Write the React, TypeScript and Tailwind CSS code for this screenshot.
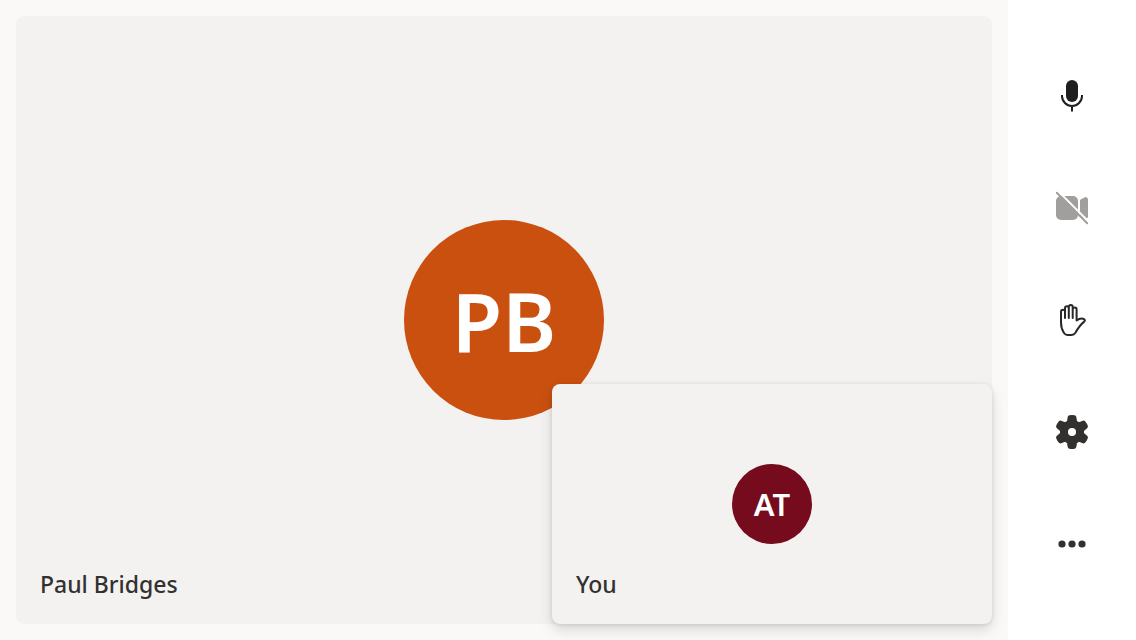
import type { ReactNode } from "react";

function ControlButton({ label, disabled, children }: { label: string; disabled?: boolean; children: ReactNode }) {
  return (
    <button
      type="button"
      aria-label={label}
      disabled={disabled}
      className="flex h-28 w-full items-center justify-center text-[#323130] disabled:text-[#a19f9d]"
    >
      <svg viewBox="0 0 40 40" className="size-10" fill="none" stroke="none" aria-hidden="true">
        {children}
      </svg>
    </button>
  );
}

const toothAngles = [0, 60, 120, 180, 240, 300];

export default function App() {
  return (
    <div className="flex min-h-screen bg-[#faf9f8] font-['Noto_Sans','Open_Sans',sans-serif] text-[#323130]">
      <main className="flex flex-1 p-4">
        <section
          aria-label="Paul Bridges"
          className="relative flex flex-1 items-center justify-center rounded-lg bg-[#f3f2f1]"
        >
          <div className="flex size-50 items-center justify-center rounded-full bg-[#ca5010] text-[82px] leading-none font-semibold text-white">
            PB
          </div>
          <p className="absolute bottom-6 left-6 text-[23px] leading-8 font-medium">Paul Bridges</p>

          <section
            aria-label="You"
            className="absolute right-0 bottom-0 flex h-60 w-110 items-center justify-center rounded-lg bg-[#f3f2f1] shadow-[0_6px_14px_rgba(0,0,0,0.13),0_1px_4px_rgba(0,0,0,0.11)]"
          >
            <div className="flex size-20 items-center justify-center rounded-full bg-[#750b1c] text-[31px] leading-none font-semibold text-white">
              AT
            </div>
            <p className="absolute bottom-6 left-6 text-[23px] leading-8 font-medium">You</p>
          </section>
        </section>
      </main>

      <nav aria-label="Call controls" className="flex w-32 flex-col justify-center bg-white">
        <ControlButton label="Mute">
          <rect x="14" y="4" width="12" height="22" rx="6" fill="#201f1e" />
          <path d="M10 19v1a10 10 0 0 0 20 0v-1M20 30v5.500" stroke="#201f1e" strokeWidth="2" />
        </ControlButton>
        <ControlButton label="Turn camera on" disabled>
          <rect x="4" y="8" width="22" height="24" rx="5" fill="currentColor" />
          <path d="M28 13q0-1.200 1-1.800l3.500-1.800q1.200-.6 2.300.1t1.200 2v17q0 1.300-1.200 2t-2.300.1l-3.500-1.800q-1-.6-1-1.800z" fill="currentColor" />
          <path d="M6 3L38 35" stroke="white" strokeWidth="2" />
          <path d="M4.800 4.800L35.200 35.200" stroke="currentColor" strokeWidth="2" strokeLinecap="round" />
        </ControlButton>
        <ControlButton label="Raise hand">
          <path
            d="M13 18V11.500Q13 9.800 11 9.800T9 11.800V22.500C9 27 10 30 12 33Q13.300 35 15.600 35H19.600Q22 35 23.400 32.800C25.500 29 28.500 24.500 32.200 21.600Q33.600 20.200 32.200 19.200C29.800 17.800 27 18.600 24.600 20.500V9.200Q24.600 7.400 22.700 7.400T20.700 9.200M20.700 18V7Q20.700 5 18.800 5T16.800 7V18M16.800 8.200Q16.800 6.300 14.900 6.300T13 8.200V14"
            stroke="#292827"
            strokeWidth="2"
            strokeLinecap="round"
            strokeLinejoin="round"
          />
        </ControlButton>
        <ControlButton label="Settings">
          <circle cx="20" cy="20" r="12" fill="currentColor" />
          {toothAngles.map((angle) => (
            <path
              key={angle}
              d="M13.500 11L15 9.200L15.700 5Q16 3.400 17.500 3.200Q20 2.800 22.500 3.200Q24 3.400 24.300 5L25 9.200L26.500 11Z"
              transform={`rotate(${angle} 20 20)`}
              fill="currentColor"
            />
          ))}
          <circle cx="20" cy="20" r="4" fill="white" />
        </ControlButton>
        <ControlButton label="More options">
          <g fill="currentColor">
            <circle cx="10" cy="20" r="3.600" />
            <circle cx="20" cy="20" r="3.600" />
            <circle cx="30" cy="20" r="3.600" />
          </g>
        </ControlButton>
      </nav>
    </div>
  );
}
